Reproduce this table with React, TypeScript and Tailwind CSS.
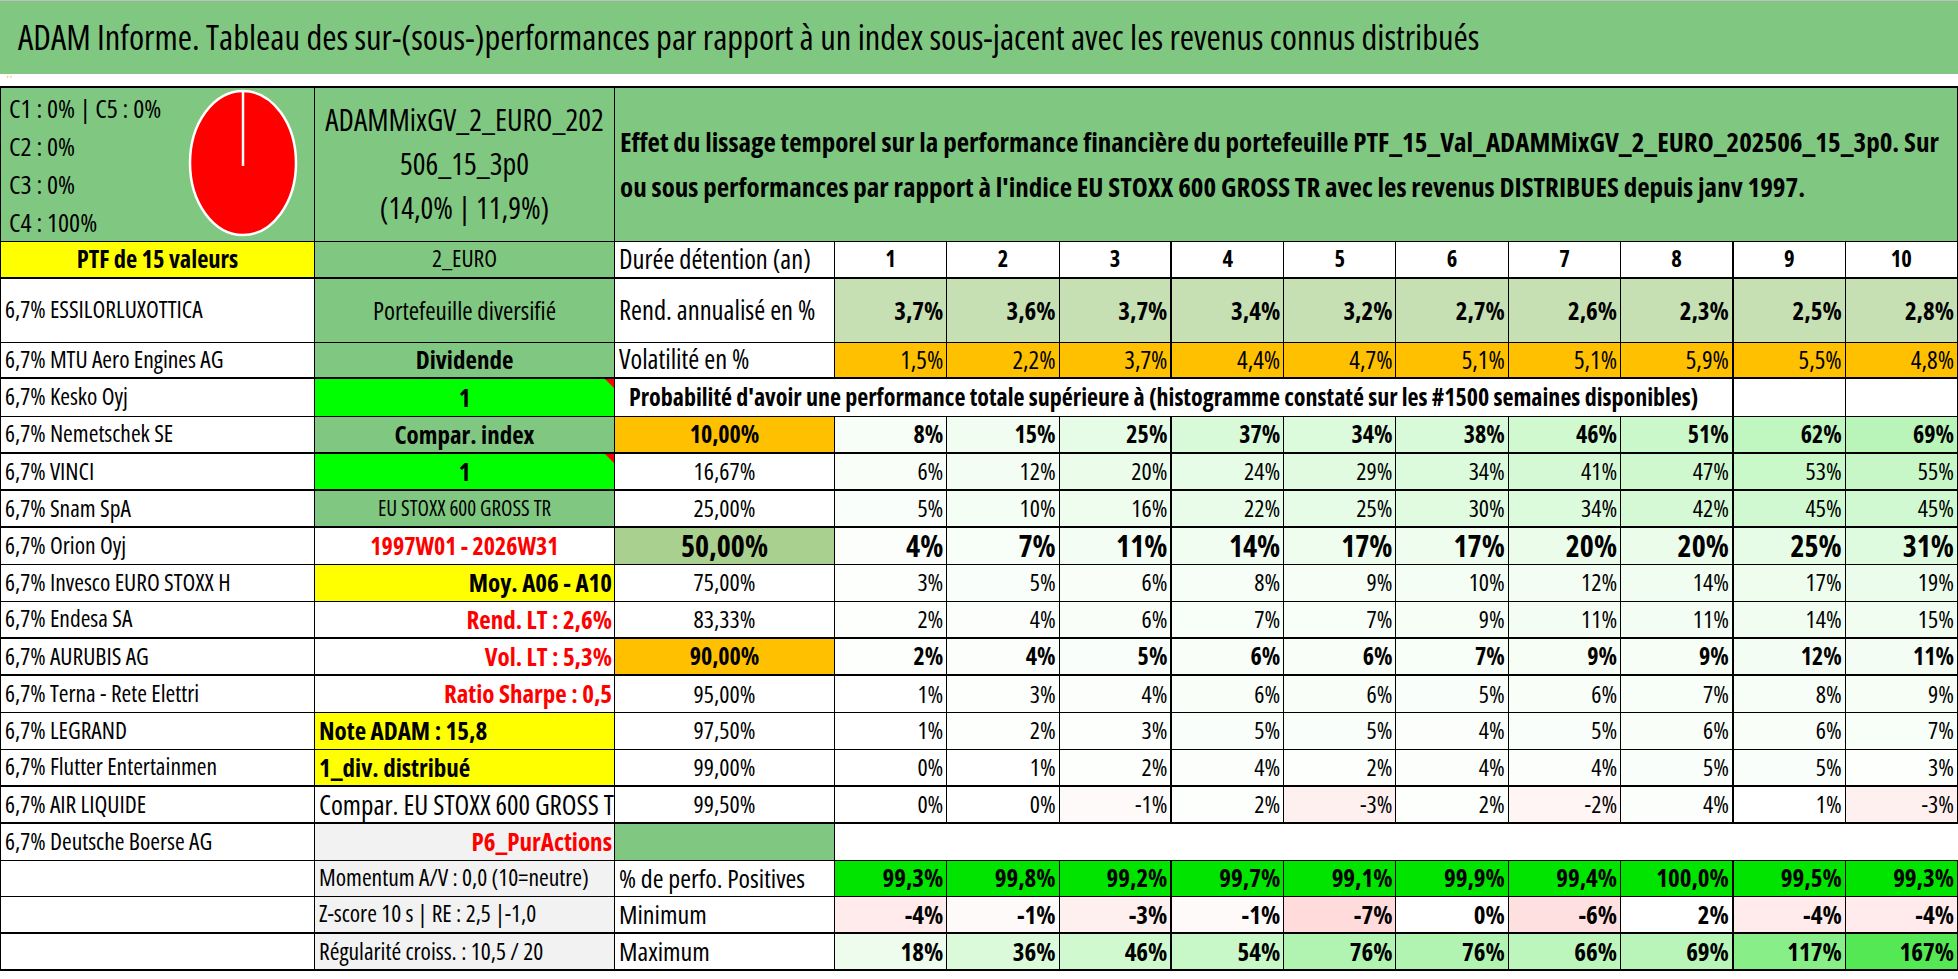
import React from 'react';
import clsx from 'clsx';

const years = [1, 2, 3, 4, 5, 6, 7, 8, 9, 10];
const rend = ['3,7%', '3,6%', '3,7%', '3,4%', '3,2%', '2,7%', '2,6%', '2,3%', '2,5%', '2,8%'];
const vol = ['1,5%', '2,2%', '3,7%', '4,4%', '4,7%', '5,1%', '5,1%', '5,9%', '5,5%', '4,8%'];

interface ProbRow {
    label: string;
    values: number[];
    bold?: boolean;
    big?: boolean;
    labelCls?: string;
    thick?: boolean;
}

const probRows: ProbRow[] = [
    { label: '10,00%', values: [8, 15, 25, 37, 34, 38, 46, 51, 62, 69], bold: true, labelCls: 'bg-[#ffc000]', thick: true },
    { label: '16,67%', values: [6, 12, 20, 24, 29, 34, 41, 47, 53, 55], thick: true },
    { label: '25,00%', values: [5, 10, 16, 22, 25, 30, 34, 42, 45, 45], thick: true },
    { label: '50,00%', values: [4, 7, 11, 14, 17, 17, 20, 20, 25, 31], bold: true, big: true, labelCls: 'bg-[#a9d08e]' },
    { label: '75,00%', values: [3, 5, 6, 8, 9, 10, 12, 14, 17, 19] },
    { label: '83,33%', values: [2, 4, 6, 7, 7, 9, 11, 11, 14, 15], thick: true },
    { label: '90,00%', values: [2, 4, 5, 6, 6, 7, 9, 9, 12, 11], bold: true, labelCls: 'bg-[#ffc000]', thick: true },
    { label: '95,00%', values: [1, 3, 4, 6, 6, 5, 6, 7, 8, 9] },
    { label: '97,50%', values: [1, 2, 3, 5, 5, 4, 5, 6, 6, 7] },
    { label: '99,00%', values: [0, 1, 2, 4, 2, 4, 4, 5, 5, 3], thick: true },
    { label: '99,50%', values: [0, 0, -1, 2, -3, 2, -2, 4, 1, -3], thick: true },
];

const holdings = [
    'ESSILORLUXOTTICA', 'MTU Aero Engines AG', 'Kesko Oyj', 'Nemetschek SE', 'VINCI', 'Snam SpA',
    'Orion Oyj', 'Invesco EURO STOXX H', 'Endesa SA', 'AURUBIS AG', 'Terna - Rete Elettri',
    'LEGRAND', 'Flutter Entertainmen', 'AIR LIQUIDE', 'Deutsche Boerse AG',
];

// col B of the probability rows (Nemetschek .. AIR LIQUIDE)
const sideCells: { text: string; cls: string; flag?: boolean }[] = [
    { text: 'Compar. index', cls: 'bg-[#80c882] text-center font-bold text-[25px]' },
    { text: '1', cls: 'bg-[#00ff00] text-center font-bold text-[25px]', flag: true },
    { text: 'EU STOXX 600 GROSS TR', cls: 'bg-[#80c882] text-center text-[21px]' },
    { text: '1997W01 - 2026W31', cls: 'text-center font-bold text-[24px] text-[#ff0000]' },
    { text: 'Moy. A06 - A10', cls: 'bg-[#ffff00] text-right font-bold text-[25px] pr-[2px]' },
    { text: 'Rend. LT : 2,6%', cls: 'text-right font-bold text-[25px] text-[#ff0000] pr-[2px]' },
    { text: 'Vol. LT : 5,3%', cls: 'text-right font-bold text-[25px] text-[#ff0000] pr-[2px]' },
    { text: 'Ratio Sharpe : 0,5', cls: 'text-right font-bold text-[25px] text-[#ff0000] pr-[2px]' },
    { text: 'Note ADAM : 15,8', cls: 'bg-[#ffff00] font-bold text-[25px]' },
    { text: '1_div. distribué', cls: 'bg-[#ffff00] font-bold text-[25px]' },
    // the sheet clips this one at the cell edge
    { text: 'Compar. EU STOXX 600 GROSS TR', cls: 'text-[27px] overflow-hidden' },
];

const positives = ['99,3%', '99,8%', '99,2%', '99,7%', '99,1%', '99,9%', '99,4%', '100,0%', '99,5%', '99,3%'];
const minimum = [-4, -1, -3, -1, -7, 0, -6, 2, -4, -4];
const maximum = [18, 36, 46, 54, 76, 76, 66, 69, 117, 167];

// excel-like colour scale: white -> green for gains, white -> red for losses
const scaleBg = (v: number) => {
    if (v >= 0) {
        const t = Math.min(1, v / 250);
        const rb = Math.round(255 * (1 - t));
        const g = Math.round(255 - 35 * t);
        return `rgb(${rb},${g},${rb})`;
    }
    const t = Math.min(1, -v / 50);
    const gb = Math.round(255 * (1 - t));
    return `rgb(255,${gb},${gb})`;
};

const yearBorder = (i: number) => (i === 3 || i === 8 ? 'border-l-2' : '');

const Td: React.FC<React.TdHTMLAttributes<HTMLTableCellElement>> = ({ className, children, ...rest }) => (
    <td className={clsx('border border-black px-[4px] py-0 leading-[1.1] align-middle whitespace-nowrap', className)} {...rest}>
        {children}
    </td>
);

const Flag = () => (
    <span className="absolute right-0 top-0 w-0 h-0 border-t-[9px] border-l-[9px] border-t-[#ff0000] border-l-transparent" />
);

const Pie = () => (
    <svg width="110" height="150" viewBox="0 0 110 150" className="ml-auto mr-[12px] shrink-0">
        <ellipse cx="55" cy="75" rx="53" ry="72" fill="#ff0000" stroke="#ffffff" strokeWidth="2.5" />
        <line x1="55" y1="3" x2="55" y2="78" stroke="#ffffff" strokeWidth="2.5" />
    </svg>
);

const App: React.FC = () => {
    return (
        <div className="w-[1958px] h-[979px] bg-white text-black text-[23.5px] font-['Open_Sans',sans-serif] [font-stretch:75%] overflow-hidden">
            <header className="h-[74px] bg-[#80c882] border-t border-[#bfbfbf] flex items-center pl-[18px]">
                <h1 className="text-[34.5px] leading-none">
                    ADAM Informe. Tableau des sur-(sous-)performances par rapport à un index sous-jacent avec les revenus connus distribués
                </h1>
            </header>
            <div className="h-[12px] flex items-start pl-[7px]">
                <span className="text-[9px] leading-none text-[#e0a800]">ʼ ʼ</span>
            </div>

            <table className="table-fixed border-collapse w-[1957px] border-t-2 border-black">
                <colgroup>
                    <col className="w-[314px]" />
                    <col className="w-[300px]" />
                    <col className="w-[220px]" />
                    {years.map(y => (
                        <col key={y} className="w-[112.3px]" />
                    ))}
                </colgroup>
                <tbody>
                    {/* header: repartition, portfolio name, description */}
                    <tr className="h-[154px]">
                        <Td className="bg-[#80c882] p-0 align-top">
                            <div className="flex h-[152px]">
                                <div className="flex flex-col pl-[4px] pt-[1px] text-[26px] leading-[38px]">
                                    <span>C1 : 0% | C5 : 0%</span>
                                    <span>C2 : 0%</span>
                                    <span>C3 : 0%</span>
                                    <span>C4 : 100%</span>
                                </div>
                                <Pie />
                            </div>
                        </Td>
                        <Td className="bg-[#80c882] text-center text-[30px] leading-[44px] overflow-hidden">
                            ADAMMixGV_2_EURO_202
                            <br />
                            506_15_3p0
                            <br />
                            (14,0% | 11,9%)
                        </Td>
                        <Td colSpan={11} className="bg-[#80c882] font-bold text-[27px] leading-[45px] pl-[5px]">
                            Effet du lissage temporel sur la performance financière du portefeuille PTF_15_Val_ADAMMixGV_2_EURO_202506_15_3p0. Sur
                            <br />
                            ou sous performances par rapport à l'indice EU STOXX 600 GROSS TR avec les revenus DISTRIBUES depuis janv 1997.
                        </Td>
                    </tr>

                    <tr className="h-[37px] border-b-2 border-black">
                        <Td className="bg-[#ffff00] text-center font-bold text-[24.5px]">PTF de 15 valeurs</Td>
                        <Td className="bg-[#80c882] text-center">2_EURO</Td>
                        <Td className="text-[26.5px]">Durée détention (an)</Td>
                        {years.map((y, i) => (
                            <Td key={y} className={clsx('text-center font-bold text-[22.5px]', yearBorder(i))}>
                                {y}
                            </Td>
                        ))}
                    </tr>

                    <tr className="h-[64px]">
                        <Td>6,7% {holdings[0]}</Td>
                        <Td className="bg-[#80c882] text-center text-[25px]">Portefeuille diversifié</Td>
                        <Td className="text-[26.5px]">Rend. annualisé en %</Td>
                        {rend.map((v, i) => (
                            <Td key={i} className={clsx('bg-[#c6e0b4] text-right font-bold text-[25px] pr-[3px]', yearBorder(i))}>
                                {v}
                            </Td>
                        ))}
                    </tr>

                    <tr className="h-[36px] border-b-2 border-black">
                        <Td>6,7% {holdings[1]}</Td>
                        <Td className="bg-[#80c882] text-center font-bold text-[25px]">Dividende</Td>
                        <Td className="text-[26.5px]">Volatilité en %</Td>
                        {vol.map((v, i) => (
                            <Td key={i} className={clsx('bg-[#ffc000] text-right text-[25px] pr-[3px] align-bottom', yearBorder(i))}>
                                {v}
                            </Td>
                        ))}
                    </tr>

                    <tr className="h-[38px]">
                        <Td>6,7% {holdings[2]}</Td>
                        <Td className="relative bg-[#00ff00] text-center font-bold text-[25px]">
                            1
                            <Flag />
                        </Td>
                        <Td colSpan={9} className="font-bold text-[24px] pl-[14px]">
                            Probabilité d'avoir une performance totale supérieure à (histogramme constaté sur les #1500 semaines disponibles)
                        </Td>
                        <Td className="border-l-2" />
                        <Td />
                    </tr>

                    {probRows.map((row, r) => {
                        const side = sideCells[r];
                        return (
                            <tr key={row.label} className={clsx('h-[37px]', row.thick && 'border-b-2 border-black')}>
                                <Td>6,7% {holdings[r + 3]}</Td>
                                <Td className={clsx('relative', side.cls)}>
                                    {side.text}
                                    {side.flag && <Flag />}
                                </Td>
                                <Td
                                    className={clsx(
                                        'text-center',
                                        row.labelCls,
                                        row.bold && 'font-bold',
                                        row.big ? 'text-[30px]' : 'text-[24px]',
                                    )}
                                >
                                    {row.label}
                                </Td>
                                {row.values.map((v, i) => (
                                    <Td
                                        key={i}
                                        className={clsx(
                                            'text-right pr-[3px]',
                                            row.bold && 'font-bold',
                                            row.big ? 'text-[30px]' : 'text-[24px]',
                                            yearBorder(i),
                                        )}
                                        style={{ backgroundColor: scaleBg(v) }}
                                    >
                                        {v}%
                                    </Td>
                                ))}
                            </tr>
                        );
                    })}

                    <tr className="h-[37px]">
                        <Td>6,7% {holdings[14]}</Td>
                        <Td className="bg-[#f2f2f2] text-right font-bold text-[25px] text-[#ff0000] pr-[2px]">P6_PurActions</Td>
                        <Td className="bg-[#80c882]" />
                        <Td colSpan={10} className="border-0 border-b border-black" />
                    </tr>

                    <tr className="h-[36px]">
                        <Td />
                        <Td className="bg-[#f2f2f2]">Momentum A/V : 0,0 (10=neutre)</Td>
                        <Td className="text-[26px]">% de perfo. Positives</Td>
                        {positives.map((v, i) => (
                            <Td key={i} className={clsx('bg-[#00e400] text-right font-bold text-[25px] pr-[3px]', yearBorder(i))}>
                                {v}
                            </Td>
                        ))}
                    </tr>

                    <tr className="h-[37px] border-b-2 border-black">
                        <Td />
                        <Td className="bg-[#f2f2f2]">Z-score 10 s | RE : 2,5 |-1,0</Td>
                        <Td className="text-[26px]">Minimum</Td>
                        {minimum.map((v, i) => (
                            <Td
                                key={i}
                                className={clsx('text-right font-bold text-[25px] pr-[3px]', yearBorder(i))}
                                style={{ backgroundColor: v > 0 ? '#ffffff' : scaleBg(v) }}
                            >
                                {v}%
                            </Td>
                        ))}
                    </tr>

                    <tr className="h-[37px] border-b-2 border-black">
                        <Td />
                        <Td className="bg-[#f2f2f2]">Régularité croiss. : 10,5 / 20</Td>
                        <Td className="text-[26px]">Maximum</Td>
                        {maximum.map((v, i) => (
                            <Td
                                key={i}
                                className={clsx('text-right font-bold text-[25px] pr-[3px]', yearBorder(i))}
                                style={{ backgroundColor: scaleBg(v) }}
                            >
                                {v}%
                            </Td>
                        ))}
                    </tr>
                </tbody>
            </table>
            <div className="h-[10px] border-b-2 border-[#a6a6a6]" />
        </div>
    );
};

export default App;
